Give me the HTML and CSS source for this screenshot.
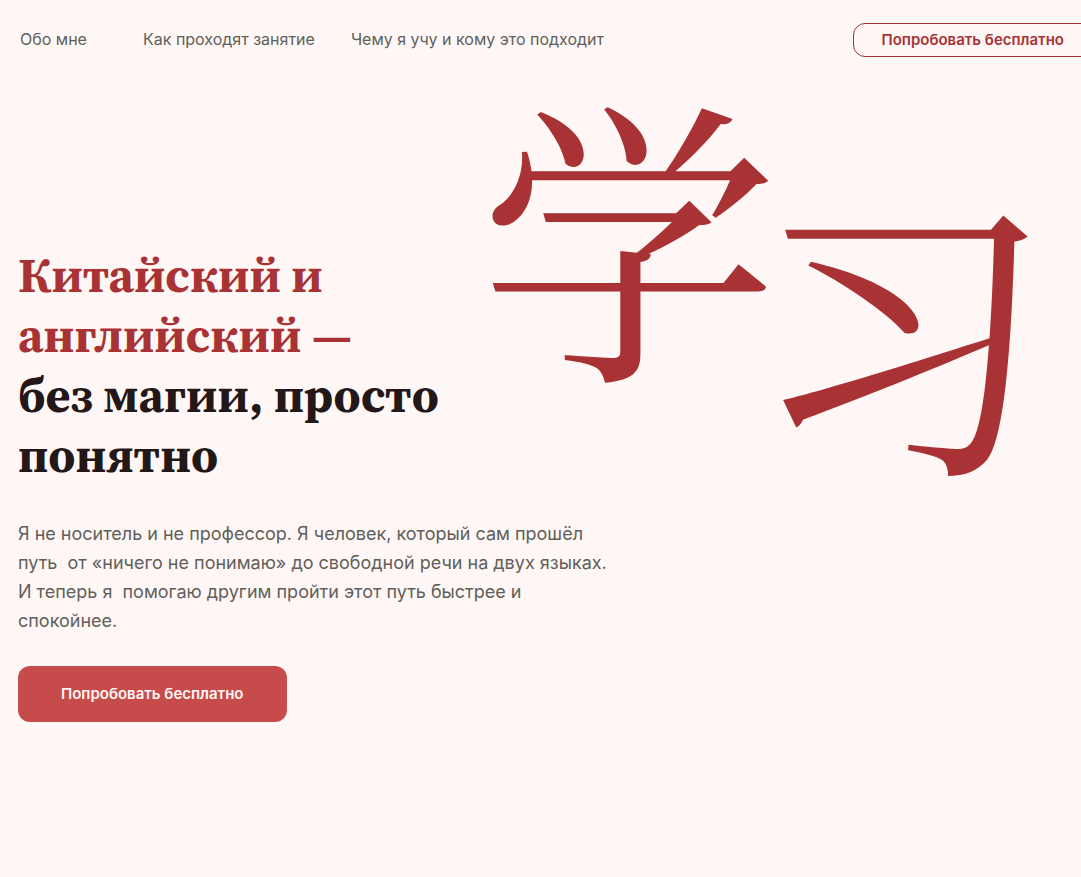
FILE: index.html
```html
<!DOCTYPE html>
<html lang="ru">
<head>
<meta charset="utf-8">
<meta name="viewport" content="width=device-width, initial-scale=1">
<title>Китайский и английский</title>
<link rel="stylesheet" href="styles.css">
</head>
<body>
<div class="page">
  <header class="header">
    <nav class="nav">
      <a class="nav-link nav-link-wide" href="#about">Обо мне</a>
      <a class="nav-link" href="#lessons">Как проходят занятие</a>
      <a class="nav-link" href="#topics">Чему я учу и кому это подходит</a>
    </nav>
    <button class="button button-outline" type="button">Попробовать бесплатно</button>
  </header>
  <main class="hero">
    <section class="intro">
      <h1 class="title"><span class="title-accent">Китайский и<br>английский —</span>без магии, просто<br>понятно</h1>
      <p class="lead">Я не носитель и не профессор. Я человек, который сам прошёл
путь  от «ничего не понимаю» до свободной речи на двух языках.
И теперь я  помогаю другим пройти этот путь быстрее и
спокойнее.</p>
      <button class="button button-solid" type="button">Попробовать бесплатно</button>
    </section>
    <div class="characters" lang="zh-Hans">
      <span class="character">学</span><span class="character character-low">习</span>
    </div>
  </main>
</div>
</body>
</html>
```
FILE: styles.css
```css
* {
  box-sizing: border-box;
}

body {
  margin: 0;
  background: #fff7f5;
  color: #60605b;
  font-family: Inter, "Noto Sans", sans-serif;
}

.page {
  min-height: 100vh;
  overflow: hidden;
}

.header {
  display: flex;
  align-items: flex-start;
  justify-content: space-between;
  margin-right: -12px;
  padding: 23px 0 0 20px;
}

.nav {
  display: flex;
  gap: 36px;
}

.nav-link {
  color: inherit;
  font-size: 16px;
  line-height: 32px;
  text-decoration: none;
  white-space: nowrap;
}

.nav-link-wide {
  min-width: 87px;
}

.button {
  border-radius: 12px;
  font-family: inherit;
  font-size: 15px;
  font-weight: 600;
  line-height: 24px;
  white-space: nowrap;
  cursor: pointer;
}

.button-outline {
  padding: 4px 28px;
  border: 1px solid #a83234;
  background: transparent;
  color: #a83234;
}

.button-solid {
  padding: 16px 43px;
  border: 0;
  background: #c74b4b;
  color: #fff7f5;
}

.hero {
  display: grid;
  grid-template-columns: 461px 1fr;
  padding-left: 18px;
}

.intro {
  padding-top: 188px;
}

.title {
  margin: 0 0 34px;
  color: #231717;
  font-family: "Source Serif 4", "Source Serif Pro", "Liberation Serif", serif;
  font-size: 48px;
  font-weight: 700;
  line-height: 60px;
  white-space: nowrap;
}

.title-accent {
  display: block;
  color: #a83234;
}

.lead {
  margin: 0 0 31px;
  font-size: 18px;
  line-height: 29px;
  white-space: pre;
}

.characters {
  display: flex;
  padding-top: 23px;
  color: #a83234;
  font-family: "Noto Serif CJK SC", "Noto Serif SC", "Noto Sans CJK SC", serif;
  font-size: 300px;
  font-weight: 400;
  line-height: 300px;
}

.character-low {
  padding-top: 93px;
  margin-left: -28px;
}
```
